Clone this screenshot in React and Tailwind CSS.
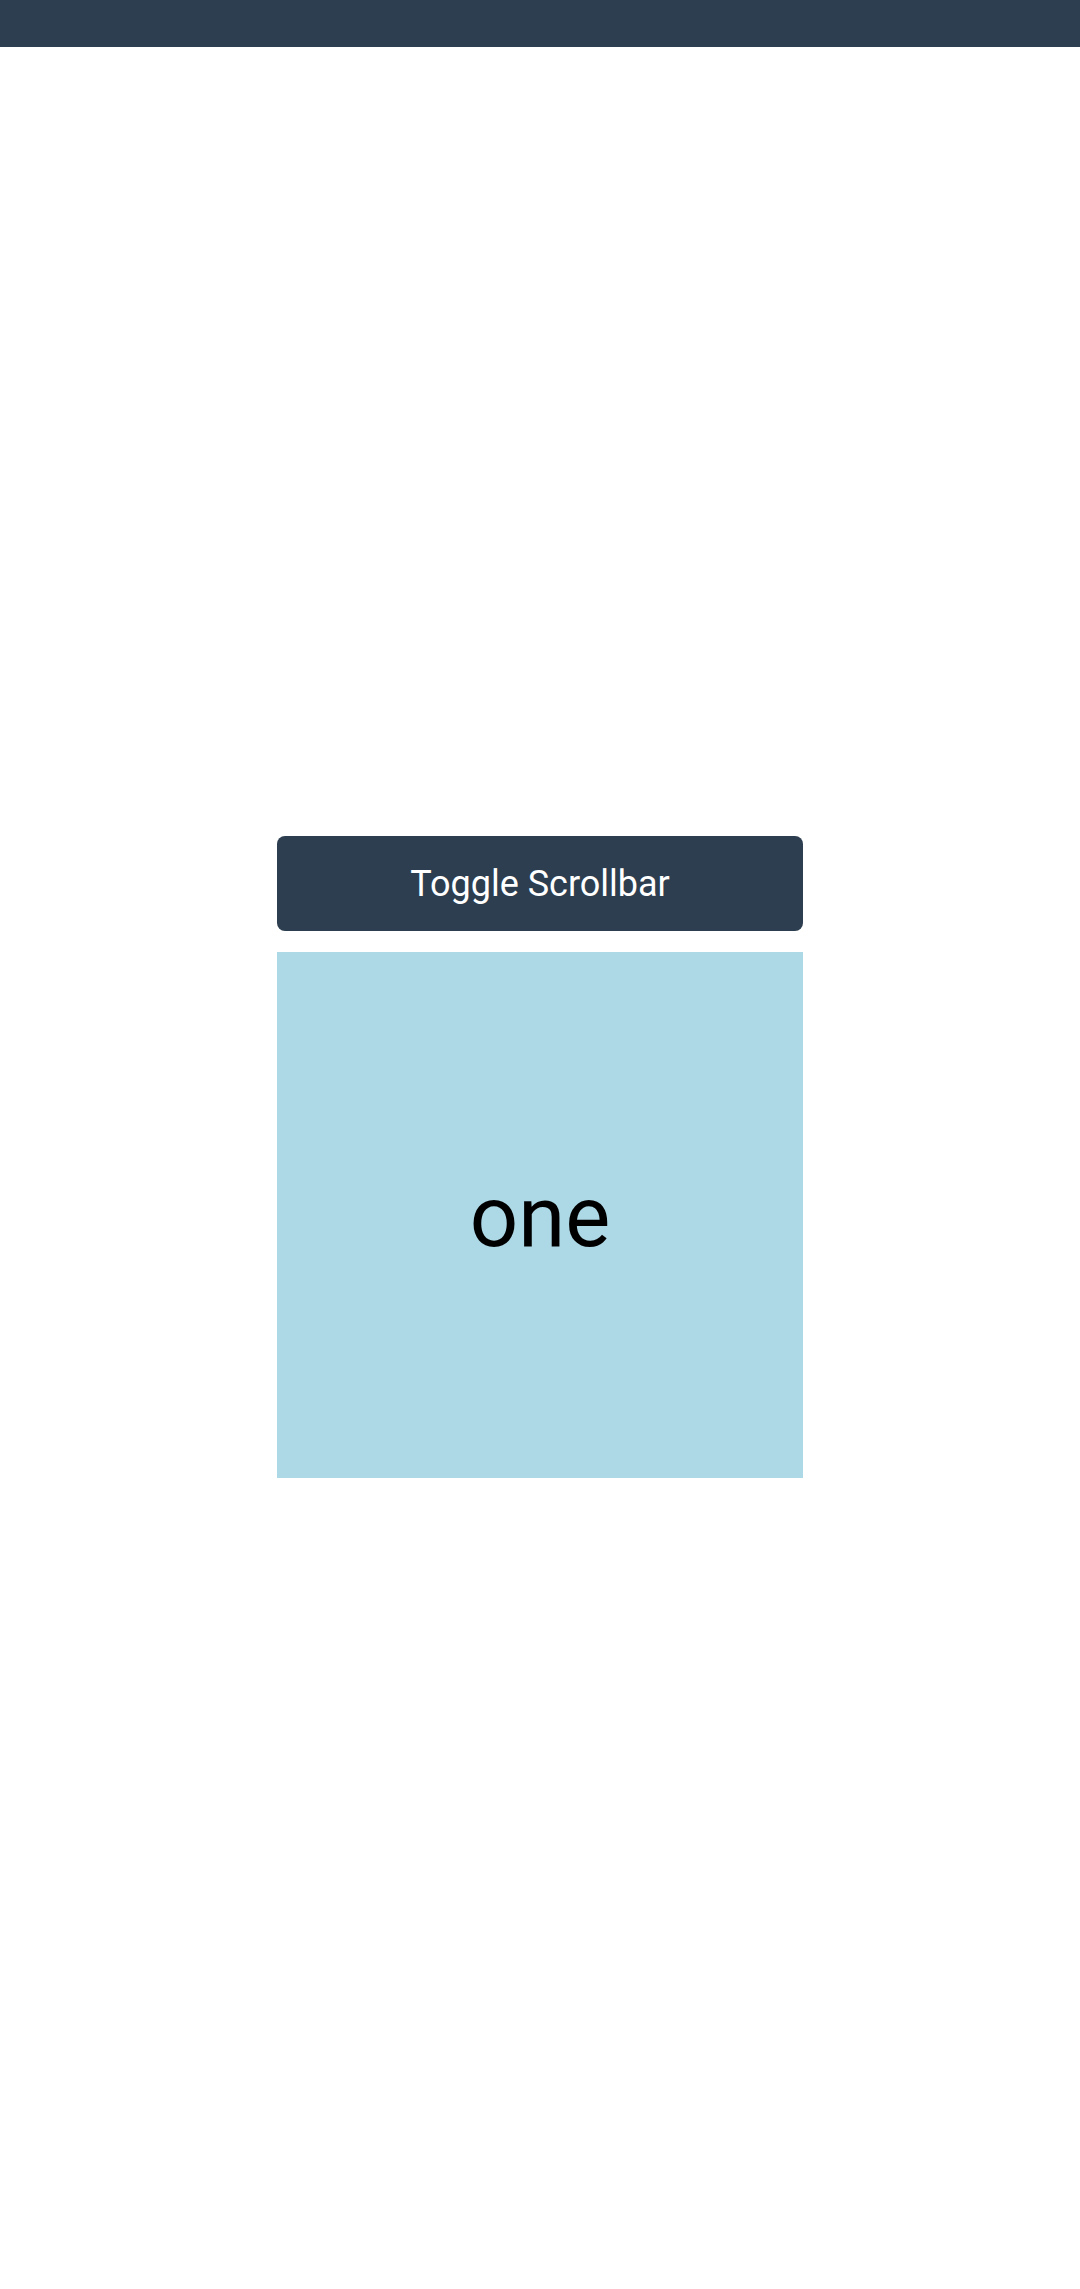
export default function App() {
  return (
    <div className="min-h-[2289px] bg-white" style={{ fontFamily: "Roboto, 'Noto Sans', sans-serif" }}>
      <div className="h-[47px] w-full bg-[#2c3e50]" />
      <div className="flex flex-col items-center pt-[789px]">
        <button className="flex h-[95px] w-[526px] items-center justify-center rounded-[8px] bg-[#2c3e50] text-[36px] text-white">
          Toggle Scrollbar
        </button>
        <div className="mt-[21px] flex h-[526px] w-[526px] items-center justify-center bg-[#add8e6] pt-[6px] text-[85px] text-black">
          one
        </div>
      </div>
    </div>
  );
}
